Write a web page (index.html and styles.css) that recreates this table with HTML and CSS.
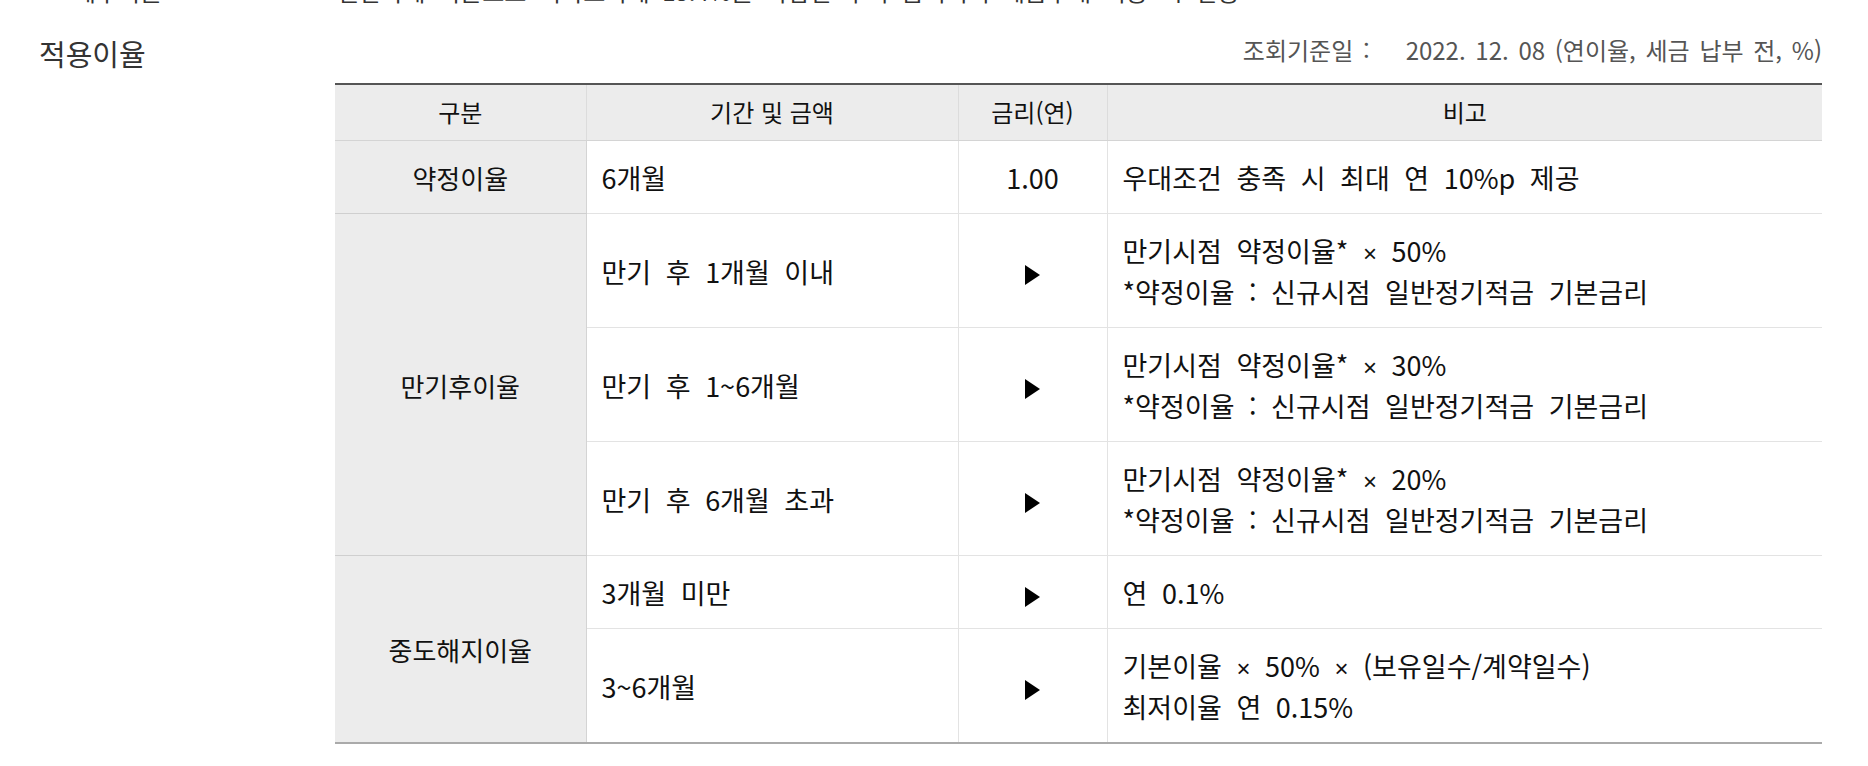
FILE: index.html
```html
<!DOCTYPE html>
<html lang="ko">
<head>
<meta charset="utf-8">
<title>적용이율</title>
<link rel="stylesheet" href="styles.css">
</head>
<body>
<div class="prev">
  <div class="prev-line"><span class="prev-left">ㆍ 세후이율</span><span class="prev-right">일반과세 기준으로 이자소득세 15.4%를 차감한 후의 금리이며 세금우대 적용 시 변동</span></div>
</div>
<div class="head">
  <h2 class="title">적용이율</h2>
  <p class="date">조회기준일 :<span class="gap"></span>2022. 12. 08 (연이율, 세금 납부 전, %)</p>
</div>
<table class="rate">
  <colgroup>
    <col class="c1"><col class="c2"><col class="c3"><col class="c4">
  </colgroup>
  <thead>
    <tr><th>구분</th><th>기간 및 금액</th><th>금리(연)</th><th>비고</th></tr>
  </thead>
  <tbody>
    <tr>
      <td class="cat">약정이율</td>
      <td>6개월</td>
      <td class="ctr">1.00</td>
      <td>우대조건 충족 시 최대 연 10%p 제공</td>
    </tr>
    <tr>
      <td class="cat" rowspan="3">만기후이율</td>
      <td>만기 후 1개월 이내</td>
      <td class="ctr"><svg class="arr" width="17" height="22" viewBox="0 0 17 22"><polygon points="1,1 16,11 1,21"/></svg></td>
      <td>만기시점 약정이율* <span class="x">×</span> 50%<br>*약정이율 : 신규시점 일반정기적금 기본금리</td>
    </tr>
    <tr>
      <td>만기 후 1~6개월</td>
      <td class="ctr"><svg class="arr" width="17" height="22" viewBox="0 0 17 22"><polygon points="1,1 16,11 1,21"/></svg></td>
      <td>만기시점 약정이율* <span class="x">×</span> 30%<br>*약정이율 : 신규시점 일반정기적금 기본금리</td>
    </tr>
    <tr>
      <td>만기 후 6개월 초과</td>
      <td class="ctr"><svg class="arr" width="17" height="22" viewBox="0 0 17 22"><polygon points="1,1 16,11 1,21"/></svg></td>
      <td>만기시점 약정이율* <span class="x">×</span> 20%<br>*약정이율 : 신규시점 일반정기적금 기본금리</td>
    </tr>
    <tr>
      <td class="cat" rowspan="2">중도해지이율</td>
      <td>3개월 미만</td>
      <td class="ctr"><svg class="arr" width="17" height="22" viewBox="0 0 17 22"><polygon points="1,1 16,11 1,21"/></svg></td>
      <td>연 0.1%</td>
    </tr>
    <tr>
      <td>3~6개월</td>
      <td class="ctr"><svg class="arr" width="17" height="22" viewBox="0 0 17 22"><polygon points="1,1 16,11 1,21"/></svg></td>
      <td>기본이율 <span class="x">×</span> 50% <span class="x">×</span> (보유일수/계약일수)<br>최저이율 연 0.15%</td>
    </tr>
  </tbody>
</table>
</body>
</html>
```

FILE: styles.css
```css
html, body {
  margin: 0;
  padding: 0;
  background: #fff;
}
body {
  font-family: "Noto Sans CJK KR", "Noto Sans", sans-serif;
  color: #111;
}
.prev {
  height: 4px;
  overflow: hidden;
}
.prev-line {
  margin-top: -22px;
  display: flex;
  font-size: 24px;
  line-height: 26px;
  color: #333;
  word-spacing: 6px;
}
.prev-left {
  width: 337px;
  padding-left: 39px;
  box-sizing: border-box;
  flex: none;
}
.head {
  display: flex;
  justify-content: space-between;
  align-items: flex-start;
  padding: 31px 46px 0 39px;
}
.title {
  margin: 0;
  font-size: 29px;
  font-weight: normal;
  line-height: 36px;
  color: #333;
}
.date {
  margin: -3px 0 0;
  font-size: 24px;
  line-height: 36px;
  color: #555;
  word-spacing: 3px;
}
.gap {
  display: inline-block;
  width: 36px;
}
.rate {
  margin: 12px 0 0 335px;
  width: 1487px;
  border-collapse: collapse;
  table-layout: fixed;
  border-top: 2px solid #555;
  border-bottom: 2px solid #aaa;
  font-size: 27px;
  word-spacing: 7px;
}
.c1 { width: 251px; }
.c2 { width: 372px; }
.c3 { width: 149px; }
.c4 { width: 715px; }
.rate th {
  background: #ececec;
  font-weight: normal;
  font-size: 24px;
  word-spacing: 0;
  color: #111;
  padding: 7px 15px 8px;
  line-height: 40px;
  border-bottom: 1px solid #d4d4d4;
  border-left: 1px solid #dcdcdc;
  text-align: center;
}
.rate th:first-child { border-left: 0; }
.rate td {
  padding: 16px 15px 15px;
  line-height: 41px;
  border-bottom: 1px solid #e3e3e3;
  border-left: 1px solid #e3e3e3;
  text-align: left;
  vertical-align: middle;
}
.rate td.cat {
  background: #ececec;
  font-size: 26px;
  text-align: center;
  border-left: 0;
  border-right: 1px solid #d4d4d4;
  border-bottom: 1px solid #cfcfcf;
  word-spacing: 0;
}
.rate td.ctr {
  text-align: center;
  padding-left: 0;
  padding-right: 0;
}
.x {
  font-family: "Liberation Sans", sans-serif;
  font-size: 24px;
  line-height: 1;
}
.arr {
  display: inline-block;
  vertical-align: middle;
  fill: #000;
}
```
